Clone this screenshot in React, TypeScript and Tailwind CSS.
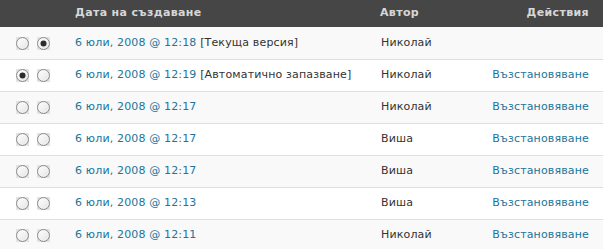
import React from 'react';

type Revision = {
    date: string;
    note?: string;
    author: string;
    left: boolean;
    right: boolean;
    restore: boolean;
};

const revisions: Revision[] = [
    { date: "6 юли, 2008 @ 12:18", note: "[Текуща версия]", author: "Николай", left: false, right: true, restore: false },
    { date: "6 юли, 2008 @ 12:19", note: "[Автоматично запазване]", author: "Николай", left: true, right: false, restore: true },
    { date: "6 юли, 2008 @ 12:17", author: "Николай", left: false, right: false, restore: true },
    { date: "6 юли, 2008 @ 12:17", author: "Виша", left: false, right: false, restore: true },
    { date: "6 юли, 2008 @ 12:17", author: "Виша", left: false, right: false, restore: true },
    { date: "6 юли, 2008 @ 12:13", author: "Виша", left: false, right: false, restore: true },
    { date: "6 юли, 2008 @ 12:11", author: "Николай", left: false, right: false, restore: true },
];

// old-style native radio: grey square behind a shaded circle
const Radio: React.FC<{ checked: boolean }> = ({ checked }) => (
    <svg width="13" height="13" viewBox="0 0 13 13" className="shrink-0">
        <defs>
            <linearGradient id="rg" x1="0" y1="0" x2="1" y2="1">
                <stop offset="0" stopColor="#ffffff" />
                <stop offset="1" stopColor="#e4e4e4" />
            </linearGradient>
        </defs>
        <rect width="13" height="13" fill="#e3e3e3" />
        <circle cx="6.5" cy="6.5" r="6" fill="url(#rg)" stroke="#8a8a8a" strokeWidth="1" />
        {checked && <circle cx="6.5" cy="6.5" r="3" fill="#2b2b2b" />}
    </svg>
);

const App: React.FC = () => {
    return (
        <div className="w-[603px] h-[249px] overflow-hidden bg-white text-[11px] tracking-[0.15px]" style={{ fontFamily: '"DejaVu Sans", sans-serif' }}>
            <div className="h-[27px] bg-[#464646] text-[#d7d7d7] font-bold tracking-[0.35px] flex items-center">
                <div className="w-[75px] shrink-0"></div>
                <div className="w-[305px] shrink-0">Дата на създаване</div>
                <div className="flex-1">Автор</div>
                <div className="pr-[14px]">Действия</div>
            </div>
            {revisions.map((r, i) => (
                <div
                    key={i}
                    className={`h-[32px] flex items-center ${i > 0 ? "border-t border-[#dfdfdf]" : ""} ${i % 2 === 0 ? "bg-[#f9f9f9]" : "bg-white"}`}
                >
                    <div className="w-[75px] shrink-0 flex items-center gap-[8px] pl-[16px]">
                        <Radio checked={r.left} />
                        <Radio checked={r.right} />
                    </div>
                    <div className="w-[306px] shrink-0 whitespace-nowrap">
                        <span className="text-[#21759b]">{r.date}</span>
                        {r.note && <span className="text-[#333333]"> {r.note}</span>}
                    </div>
                    <div className="flex-1 text-[#333333]">{r.author}</div>
                    {r.restore && <div className="pr-[14px] text-[#21759b]">Възстановяване</div>}
                </div>
            ))}
        </div>
    );
};

export default App;
